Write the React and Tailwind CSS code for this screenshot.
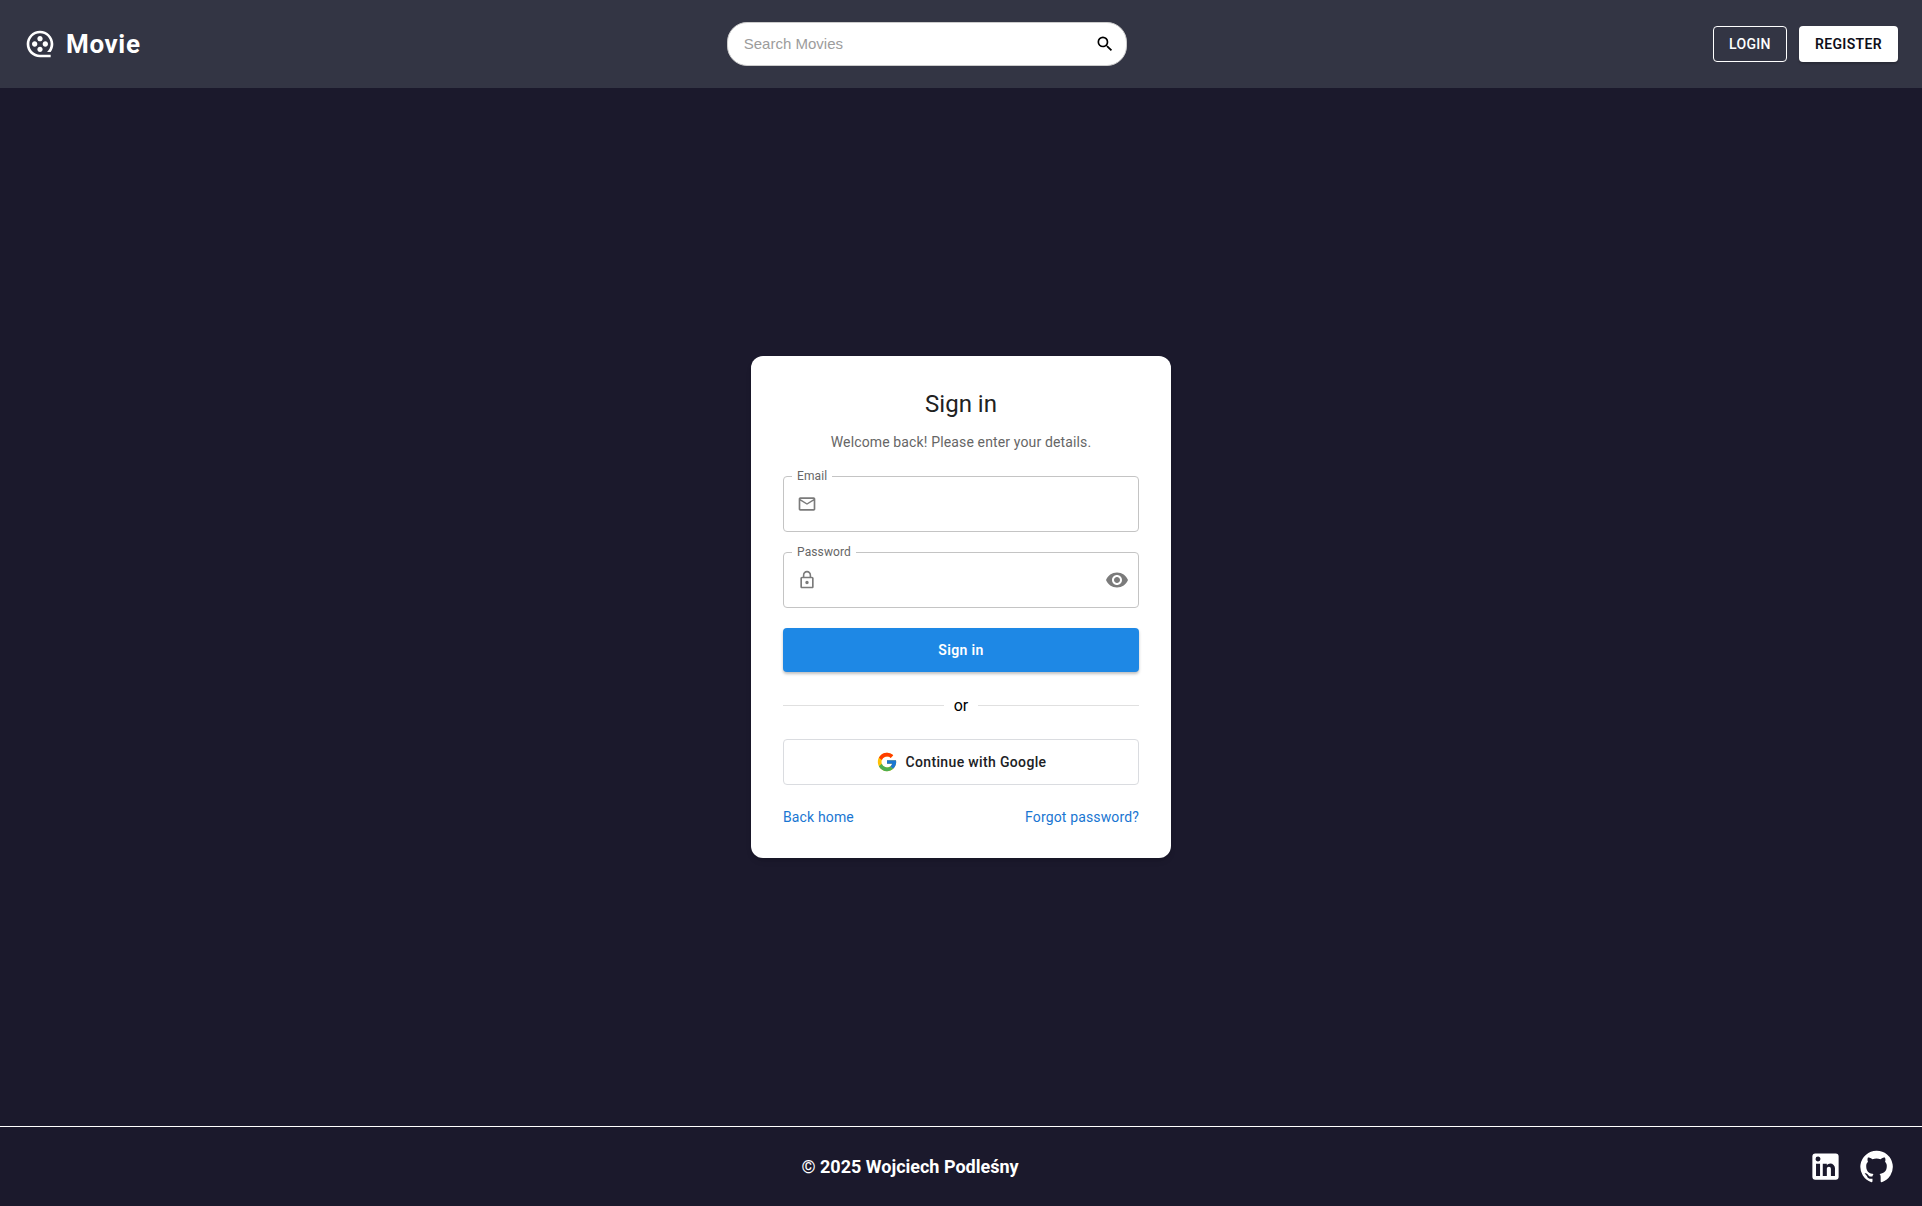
import React, { useState } from 'react';
import { RiMovie2Line } from 'react-icons/ri';
import { MdSearch, MdMailOutline, MdLockOutline, MdVisibility, MdVisibilityOff } from 'react-icons/md';
import { FcGoogle } from 'react-icons/fc';

const LinkedInIcon = () => (
  <svg className="w-[35px] h-[35px]" fill="currentColor" viewBox="0 0 24 24" aria-hidden="true">
    <path d="M19 3a2 2 0 0 1 2 2v14a2 2 0 0 1-2 2H5a2 2 0 0 1-2-2V5a2 2 0 0 1 2-2h14m-.5 15.5v-5.3a3.26 3.26 0 0 0-3.26-3.26c-.85 0-1.84.52-2.32 1.3v-1.11h-2.79v8.37h2.79v-4.93c0-.77.62-1.4 1.39-1.4a1.4 1.4 0 0 1 1.4 1.4v4.93h2.79M6.88 8.56a1.68 1.68 0 0 0 1.68-1.68c0-.93-.75-1.69-1.68-1.69a1.69 1.69 0 0 0-1.69 1.69c0 .93.76 1.68 1.69 1.68m1.39 9.94v-8.37H5.5v8.37h2.77z" />
  </svg>
);

const GitHubIcon = () => (
  <svg className="w-[35px] h-[35px]" fill="currentColor" viewBox="0 0 24 24" aria-hidden="true">
    <path d="M12 1.27a11 11 0 00-3.48 21.46c.55.09.73-.28.73-.55v-1.84c-3.03.64-3.67-1.46-3.67-1.46-.55-1.29-1.28-1.65-1.28-1.65-.92-.65.1-.65.1-.65 1.1 0 1.73 1.1 1.73 1.1.92 1.65 2.57 1.2 3.21.92a2 2 0 01.64-1.47c-2.47-.27-5.04-1.19-5.04-5.5 0-1.1.46-2.1 1.2-2.84a3.76 3.76 0 010-2.93s.91-.28 3.11 1.1c1.8-.49 3.7-.49 5.5 0 2.1-1.38 3.02-1.1 3.02-1.1a3.76 3.76 0 01.1 2.93c.83.74 1.2 1.74 1.2 2.94 0 4.21-2.57 5.13-5.04 5.4.45.37.82.92.82 2.02v3.03c0 .27.1.64.73.55A11 11 0 0012 1.27" />
  </svg>
);

const Header = () => {
  const [query, setQuery] = useState('');

  return (
    <header className="flex items-center justify-between gap-6 h-[88px] px-6 bg-[#333544]">
      <a href="/" className="flex items-center gap-2.5 text-white">
        <RiMovie2Line className="w-8 h-8" />
        <span className="text-[26px] font-bold tracking-wide">Movie</span>
      </a>

      <form
        onSubmit={(e) => e.preventDefault()}
        className="flex items-center w-[400px] h-11 pl-4 pr-[11px] bg-white border border-[#cccccc] rounded-[20px]"
      >
        <input
          type="text"
          aria-label="Search Movies"
          value={query}
          onChange={(e) => setQuery(e.target.value)}
          placeholder="Search Movies"
          className="flex-1 min-w-0 text-[15px] font-['Liberation_Sans',sans-serif] text-black placeholder:text-[#9c9c9c] focus:outline-none"
        />
        <button type="submit" aria-label="Search" className="text-black">
          <MdSearch className="w-5 h-5" />
        </button>
      </form>

      <div className="flex gap-3">
        <button className="h-9 px-[15px] rounded border border-white text-sm font-medium tracking-wide text-white">
          LOGIN
        </button>
        <button className="h-9 px-4 rounded bg-white text-sm font-semibold tracking-wide text-[#0f0f1a] shadow-[0_2px_2px_rgba(0,0,0,0.2)]">
          REGISTER
        </button>
      </div>
    </header>
  );
};

// Outlined text box with its label sitting on the top border
const Field = ({ id, label, type, icon, children }) => (
  <div className="relative flex items-center h-14 pl-[13px] pr-[9px] rounded border border-[#c4c4c4] text-[#7b7b7b]">
    <label htmlFor={id} className="absolute -top-[9px] left-2 px-[5px] bg-white text-xs leading-4 tracking-[0.01em] text-[#666666]">
      {label}
    </label>
    {icon}
    <input id={id} type={type} className="flex-1 min-w-0 h-full px-2 text-base text-[#212121] focus:outline-none" />
    {children}
  </div>
);

const SignInCard = () => {
  const [showPassword, setShowPassword] = useState(false);

  return (
    <div className="w-full max-w-[420px] px-8 pt-8 pb-[29px] bg-white rounded-xl shadow-md">
      <h1 className="text-2xl leading-8 text-center text-[#212121]">Sign in</h1>
      <p className="mt-3 text-sm leading-5 tracking-[0.01em] text-center text-[#666666]">
        Welcome back! Please enter your details.
      </p>

      <form onSubmit={(e) => e.preventDefault()} className="flex flex-col gap-5 mt-6">
        <Field id="email" label="Email" type="email" icon={<MdMailOutline className="w-5 h-5" />} />
        <Field
          id="password"
          label="Password"
          type={showPassword ? 'text' : 'password'}
          icon={<MdLockOutline className="w-5 h-5" />}
        >
          <button
            type="button"
            aria-label={showPassword ? 'Hide password' : 'Show password'}
            onClick={() => setShowPassword(!showPassword)}
          >
            {showPassword ? <MdVisibilityOff className="w-6 h-6" /> : <MdVisibility className="w-6 h-6" />}
          </button>
        </Field>

        <button
          type="submit"
          className="h-11 rounded bg-[#1e88e5] text-sm font-semibold tracking-wide text-white shadow-[0_2px_3px_rgba(0,0,0,0.25)]"
        >
          Sign in
        </button>

        <div className="flex items-center gap-2.5 text-base leading-[27px] text-black">
          <span className="flex-1 h-px bg-[#e0e0e0]"></span>
          or
          <span className="flex-1 h-px bg-[#e0e0e0]"></span>
        </div>

        <button
          type="button"
          className="flex items-center justify-center gap-2 h-[46px] rounded border border-[#dadce0] text-sm font-medium tracking-wide text-[#202124]"
        >
          <FcGoogle className="w-[22px] h-[22px]" />
          Continue with Google
        </button>

        <div className="flex justify-between text-sm leading-6 tracking-[0.01em] text-[#1976d2]">
          <a href="/">Back home</a>
          <a href="/forgot-password">Forgot password?</a>
        </div>
      </form>
    </div>
  );
};

const Footer = () => (
  <footer className="flex items-center gap-4 h-20 px-7 border-t border-white text-white">
    <p className="flex-1 text-lg font-bold text-center">© 2025 Wojciech Podleśny</p>
    <div className="flex gap-4">
      <a href="https://www.linkedin.com" aria-label="LinkedIn">
        <LinkedInIcon />
      </a>
      <a href="https://github.com" aria-label="GitHub">
        <GitHubIcon />
      </a>
    </div>
  </footer>
);

const App = () => (
  <div className="flex flex-col min-h-screen bg-[#1b192c] font-['Roboto',sans-serif]">
    <Header />
    <main className="flex flex-1 items-center justify-center py-8">
      <SignInCard />
    </main>
    <Footer />
  </div>
);

export default App;
